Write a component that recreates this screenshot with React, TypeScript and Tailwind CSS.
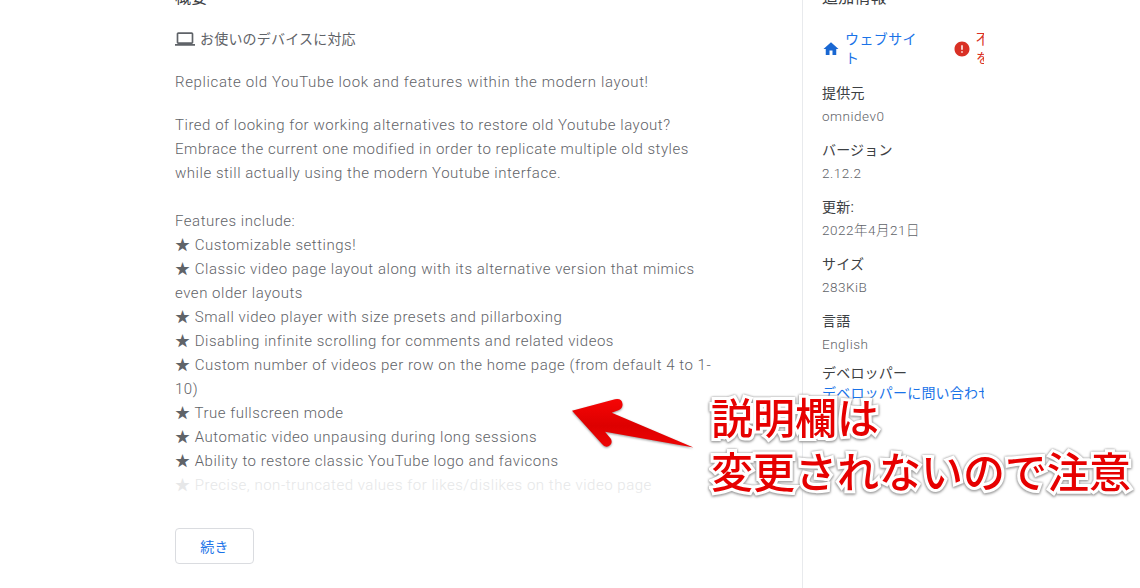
const features = [
  "Customizable settings!",
  "Classic video page layout along with its alternative version that mimics even older layouts",
  "Small video player with size presets and pillarboxing",
  "Disabling infinite scrolling for comments and related videos",
  "Custom number of videos per row on the home page (from default 4 to 1-10)",
  "True fullscreen mode",
  "Automatic video unpausing during long sessions",
  "Ability to restore classic YouTube logo and favicons",
];

const details = [
  { label: "提供元", value: "omnidev0" },
  { label: "バージョン", value: "2.12.2" },
  { label: "更新:", value: "2022年4月21日" },
  { label: "サイズ", value: "283KiB" },
  { label: "言語", value: "English" },
];

function Arrow() {
  return (
    <svg className="absolute left-[570px] top-[398px] [filter:drop-shadow(0_1px_1px_#999)]" width="126" height="54" viewBox="0 0 126 54">
      <defs>
        <linearGradient id="arrowRed" x1="0" y1="0" x2="0" y2="1">
          <stop offset="0" stopColor="#f60505" />
          <stop offset="0.55" stopColor="#dd0000" />
          <stop offset="1" stopColor="#ee0404" />
        </linearGradient>
      </defs>
      <path
        d="M2 12.7 L45 1.2 Q52 0 52.5 6 Q53 10 49 12 L41.7 14.7 L123.5 49.5 L35 33.7 L41 41 Q43 46 39 48 Q35 50 32 46 Z"
        fill="url(#arrowRed)"
      />
    </svg>
  );
}

export default function App() {
  return (
    <div className="relative h-[588px] w-[1140px] overflow-hidden bg-white font-['Roboto','Noto_Sans_CJK_JP',sans-serif] text-[14px] leading-6 tracking-[0.2px] text-[#5f6368]">
      <div className="-mt-[14px] flex">
        <main className="ml-[175px] w-[540px]">
          <h2 className="text-[16px] leading-6 text-[#3c4043]">概要</h2>
          <div className="mt-[17px] flex items-center gap-[5px]">
            <svg width="20" height="20" viewBox="0 0 24 24" fill="#5f6368">
              <path d="M20 18c1.1 0 2-.9 2-2V6c0-1.1-.9-2-2-2H4c-1.1 0-2 .9-2 2v10c0 1.1.9 2 2 2H0v2h24v-2h-4zM4 6h16v10H4V6z" />
            </svg>
            <span>お使いのデバイスに対応</span>
          </div>
          <div className="text-[15px] font-light tracking-[0.53px]">
            <p className="mt-[19px] tracking-[0.64px]">Replicate old YouTube look and features within the modern layout!</p>
            <p className="mt-[19px]">
              Tired of looking for working alternatives to restore old Youtube layout? Embrace the current one modified in order to replicate multiple old styles while still actually using the modern Youtube interface.
            </p>
            <p className="mt-6">Features include:</p>
            <ul>
              {features.map((f) => (
                <li key={f}>★ {f}</li>
              ))}
              <li className="text-[#e6e7e8]">★ Precise, non-truncated values for likes/dislikes on the video page</li>
            </ul>
          </div>
          <button className="mt-[31px] h-9 w-[79px] rounded border border-[#dadce0] bg-white pt-px text-[14px] text-[#1a73e8]">続き</button>
        </main>

        <div className="ml-[87px] h-[640px] w-px bg-[#e8eaed]" />

        <aside className="ml-[19px] w-[162px] overflow-hidden">
          <h2 className="text-[16px] leading-6 text-[#3c4043]">追加情報</h2>
          <div className="mt-[20px] flex w-[240px] items-center">
            <svg width="18" height="18" viewBox="0 0 24 24" fill="#1967d2" className="shrink-0">
              <path d="M10 20v-6h4v6h5v-8h3L12 3 2 12h3v8z" />
            </svg>
            <span className="ml-[5px] w-[76px] leading-[19px] tracking-[0.4px] text-[#1a73e8]">ウェブサイト</span>
            <svg width="18" height="18" viewBox="0 0 24 24" fill="#d93025" className="ml-[32px] shrink-0">
              <path d="M12 2C6.48 2 2 6.48 2 12s4.48 10 10 10 10-4.48 10-10S17.52 2 12 2zm1 15h-2v-2h2v2zm0-4h-2V7h2v6z" />
            </svg>
            <span className="ml-[5px] w-[76px] leading-[19px] tracking-[0.4px] text-[#d93025]">
              不正行為
              <br />
              を報告
            </span>
          </div>
          <dl className="mt-[13px]">
            {details.map((d) => (
              <div key={d.label} className="mb-[10px]">
                <dt className="text-[#3c4043]">{d.label}</dt>
                <dd className="-mt-px text-[13.5px] font-light tracking-[0.5px]">{d.value}</dd>
              </div>
            ))}
            <dt className="-mt-[3px] leading-[20px] text-[#3c4043]">デベロッパー</dt>
            <dd className="whitespace-nowrap leading-[20px] text-[#1a73e8]">デベロッパーに問い合わせ</dd>
          </dl>
        </aside>
      </div>

      <Arrow />
      <div className="absolute left-[711px] top-[393px] whitespace-nowrap text-[42px] font-medium leading-[54px] tracking-normal text-[#e60000] [-webkit-text-stroke:6px_white] [filter:drop-shadow(0_0_1px_#aaa)_drop-shadow(0_1px_1px_#999)] [paint-order:stroke_fill]">
        <div>説明欄は</div>
        <div>変更されないので注意</div>
      </div>
    </div>
  );
}
